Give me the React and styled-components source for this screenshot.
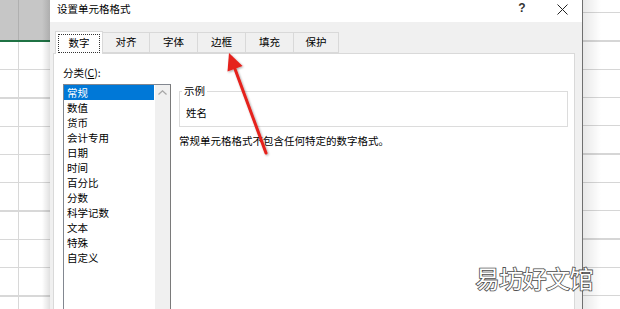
import React from "react";
import styled, { createGlobalStyle } from "styled-components";

const Global = createGlobalStyle`
  html, body { margin: 0; padding: 0; background: #fff; }
  body { overflow: hidden; font-family: "Noto Sans CJK SC", "Noto Sans", sans-serif; }
`;

const Page = styled.div`
  position: relative;
  width: 620px;
  height: 309px;
  display: flex;
  overflow: hidden;
  background: #fff;
`;

const LeftSheet = styled.div`
  position: relative;
  width: 50px;
  flex: none;
  display: flex;
  flex-direction: column;
  background-color: #fff;
`;

const SheetShade = styled.div`
  position: absolute;
  top: 0;
  bottom: 0;
  right: 0;
  width: 8px;
  background: linear-gradient(to right, rgba(0,0,0,0), rgba(0,0,0,0.12));
`;

const SheetHeader = styled.div`
  height: 40px;
  flex: none;
  display: flex;
  background: #c6c6c6;
  border-bottom: 2px solid #1f7244;
`;

const SheetRows = styled.div`
  flex: 1;
  display: flex;
  background-image: repeating-linear-gradient(
    to bottom,
    transparent 0px,
    transparent 27px,
    #d8d8d8 27px,
    #d8d8d8 28.3px
  );
`;

const SheetCell = styled.div`
  width: ${(p) => p.$w}px;
  flex: none;
  border-right: 1px solid ${(p) => p.$line};
`;

const RightSheet = styled.div`
  flex: 1;
  background-color: #fff;
  background-image:
    linear-gradient(to right, rgba(0,0,0,0.09) 0px, rgba(0,0,0,0) 18px),
    repeating-linear-gradient(
      to bottom,
      transparent 0px,
      transparent 12px,
      #d6d6d6 12px,
      #d6d6d6 13.3px,
      transparent 13.3px,
      transparent 28.3px
    );
`;

const Dialog = styled.div`
  width: 532px;
  flex: none;
  height: 340px;
  display: flex;
  flex-direction: column;
  border-right: 1px solid #6f6f6f;
  background: #f0f0f0;
`;

const TitleBar = styled.div`
  height: 22px;
  flex: none;
  background: #fff;
  display: flex;
  align-items: center;
  padding: 0 0 0 7px;
  font-size: 10.5px;
  color: #000;
`;

const Title = styled.span`
  flex: 1;
  line-height: 14px;
  margin-top: -4px;
`;

const HelpButton = styled.span`
  width: 20px;
  font-family: "Liberation Sans", sans-serif;
  font-size: 12px;
  font-weight: bold;
  color: #333;
  text-align: center;
  margin-top: -6px;
`;

const CloseButton = styled.span`
  width: 40px;
  height: 22px;
  display: flex;
  align-items: center;
  justify-content: center;
  margin-top: -4px;
  margin-left: 10px;
`;

const Body = styled.div`
  flex: 1;
  display: flex;
  flex-direction: column;
  padding: 9px 7px 0 3px;
`;

const TabRow = styled.div`
  display: flex;
  align-items: flex-end;
  height: 22px;
  padding-left: 2px;
`;

const Tab = styled.div`
  box-sizing: border-box;
  width: ${(p) => p.$w}px;
  height: ${(p) => (p.$active ? 23 : 21)}px;
  margin-bottom: ${(p) => (p.$active ? -1 : 0)}px;
  margin-left: ${(p) => (p.$first ? 0 : -1)}px;
  position: relative;
  z-index: ${(p) => (p.$active ? 2 : 1)};
  background: ${(p) => (p.$active ? "#fff" : "#f0f0f0")};
  border: 1px solid #d9d9d9;
  border-bottom: ${(p) => (p.$active ? "none" : "1px solid #d9d9d9")};
  display: flex;
  align-items: stretch;
  justify-content: stretch;
  padding: ${(p) => (p.$active ? "2px 2px 1px 2px" : "0")};
  font-size: 10.5px;
  color: #000;
`;

const TabLabel = styled.span`
  flex: 1;
  display: flex;
  align-items: center;
  justify-content: center;
  border: 1px dotted ${(p) => (p.$focus ? "#333" : "transparent")};
  line-height: 14px;
  padding-bottom: 1px;
`;

const Panel = styled.div`
  flex: 1;
  background: #fff;
  border: 1px solid #d9d9d9;
  display: flex;
  gap: 8px;
  padding: 12px 0 0 9px;
  font-size: 10.5px;
  color: #000;
`;

const LeftColumn = styled.div`
  width: 108px;
  display: flex;
  flex-direction: column;
`;

const FieldLabel = styled.div`
  line-height: 14px;
  height: 14px;
  margin-bottom: 4px;
  u { text-decoration: underline; text-underline-offset: 1px; }
`;

const ListBox = styled.div`
  flex: 1;
  display: flex;
  border: 1px solid #828790;
  border-right-color: #7a7a7a;
`;

const ListItems = styled.div`
  width: 90px;
  display: flex;
  flex-direction: column;
`;

const ListItem = styled.div`
  height: 15px;
  line-height: 15px;
  padding-left: 3px;
  background: ${(p) => (p.$selected ? "#0078d7" : "transparent")};
  color: ${(p) => (p.$selected ? "#fff" : "#000")};
  white-space: nowrap;
`;

const ScrollBar = styled.div`
  margin-left: 1px;
  flex: 1;
  background: #f0f0f0;
  display: flex;
  flex-direction: column;
  align-items: center;
`;

const ScrollArrow = styled.div`
  height: 15px;
  width: 100%;
  display: flex;
  align-items: center;
  justify-content: center;
`;

const RightColumn = styled.div`
  width: 389px;
  margin-top: 25px;
  display: flex;
  flex-direction: column;
`;

const GroupBox = styled.div`
  position: relative;
  box-sizing: border-box;
  height: 36px;
  border: 1px solid #dcdcdc;
  padding: 14px 0 0 6px;
  line-height: 14px;
`;

const GroupLegend = styled.span`
  position: absolute;
  left: 2px;
  top: -8px;
  padding: 0 2px;
  background: #fff;
  line-height: 14px;
`;

const Description = styled.div`
  margin-top: 7px;
  line-height: 14px;
`;

const ArrowLayer = styled.svg`
  position: absolute;
  left: 0;
  top: 0;
  pointer-events: none;
`;

const Watermark = styled.div`
  position: absolute;
  right: 27px;
  top: 263px;
  font-family: "Noto Sans CJK SC", sans-serif;
  font-size: 24px;
  line-height: 30px;
  color: #fff;
  -webkit-text-stroke: 1.6px #555;
  paint-order: stroke fill;
  text-shadow: 0 0 2px rgba(0,0,0,0.3);
  letter-spacing: -0.5px;
  white-space: nowrap;
`;

const tabs = [
  { label: "数字", w: 48 },
  { label: "对齐", w: 48 },
  { label: "字体", w: 49 },
  { label: "边框", w: 49 },
  { label: "填充", w: 49 },
  { label: "保护", w: 46 },
];

const categories = [
  "常规",
  "数值",
  "货币",
  "会计专用",
  "日期",
  "时间",
  "百分比",
  "分数",
  "科学记数",
  "文本",
  "特殊",
  "自定义",
];

export default function App() {
  return (
    <>
      <Global />
      <Page>
        <LeftSheet>
          <SheetHeader>
            <SheetCell $w={18} $line="#b0b0b0" />
          </SheetHeader>
          <SheetRows>
            <SheetCell $w={18} $line="#d8d8d8" />
          </SheetRows>
          <SheetShade />
        </LeftSheet>
        <Dialog>
          <TitleBar>
            <Title>设置单元格格式</Title>
            <HelpButton>?</HelpButton>
            <CloseButton>
              <svg width="11" height="11" viewBox="0 0 11 11">
                <path d="M0.5 0.5 L10.5 10.5 M10.5 0.5 L0.5 10.5" stroke="#222" strokeWidth="1" fill="none" />
              </svg>
            </CloseButton>
          </TitleBar>
          <Body>
            <TabRow>
              {tabs.map((t, i) => (
                <Tab key={t.label} $w={t.w} $active={i === 0} $first={i === 0}>
                  <TabLabel $focus={i === 0}>{t.label}</TabLabel>
                </Tab>
              ))}
            </TabRow>
            <Panel>
              <LeftColumn>
                <FieldLabel>
                  分类(<u>C</u>):
                </FieldLabel>
                <ListBox>
                  <ListItems>
                    {categories.map((c, i) => (
                      <ListItem key={c} $selected={i === 0}>
                        {c}
                      </ListItem>
                    ))}
                  </ListItems>
                  <ScrollBar>
                    <ScrollArrow>
                      <svg width="9" height="5" viewBox="0 0 9 5">
                        <path d="M0.5 4.5 L4.5 0.8 L8.5 4.5" stroke="#a6a6a6" strokeWidth="1.2" fill="none" />
                      </svg>
                    </ScrollArrow>
                  </ScrollBar>
                </ListBox>
              </LeftColumn>
              <RightColumn>
                <GroupBox>
                  <GroupLegend>示例</GroupLegend>
                  姓名
                </GroupBox>
                <Description>常规单元格格式不包含任何特定的数字格式。</Description>
              </RightColumn>
            </Panel>
          </Body>
        </Dialog>
        <RightSheet />
        <ArrowLayer width="620" height="309" viewBox="0 0 620 309">
          <defs>
            <filter id="sh" x="-20%" y="-20%" width="140%" height="140%">
              <feDropShadow dx="1" dy="1" stdDeviation="1" floodColor="#000" floodOpacity="0.35" />
            </filter>
          </defs>
          <g filter="url(#sh)">
            <line x1="266" y1="153" x2="235" y2="69" stroke="#e5201b" strokeWidth="3" strokeLinecap="round" />
            <polygon points="229,53 242.5,66 227.5,71.5" fill="#e5201b" />
          </g>
        </ArrowLayer>
        <Watermark>易坊好文馆</Watermark>
      </Page>
    </>
  );
}
